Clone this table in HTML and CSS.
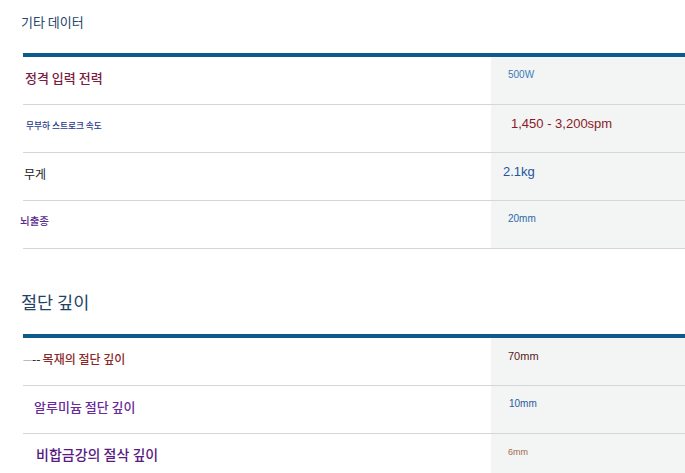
FILE: index.html
```html
<html>
  <head>
    <title>기술 데이터</title>
    <link rel="stylesheet" href="styles.css">
  </head>
  <body>
    <div class="section">
      <h3 class="title title-small">기타 데이터</h3>
      <div class="specs">
        <div class="row r1">
          <div class="label">정격 입력 전력</div>
          <div class="value">500W</div>
        </div>
        <div class="row r2">
          <div class="label">무부하 스트로크 속도</div>
          <div class="value">1,450 - 3,200spm</div>
        </div>
        <div class="row r3">
          <div class="label">무게</div>
          <div class="value">2.1kg</div>
        </div>
        <div class="row r4">
          <div class="label">뇌출종</div>
          <div class="value">20mm</div>
        </div>
      </div>
    </div>

    <div class="section second">
      <h3 class="title title-big">절단 깊이</h3>
      <div class="specs">
        <div class="row r5">
          <div class="label"><span class="smudge">一</span><span class="dash">--</span>목재의 절단 깊이</div>
          <div class="value">70mm</div>
        </div>
        <div class="row r6">
          <div class="label">알루미늄 절단 깊이</div>
          <div class="value">10mm</div>
        </div>
        <div class="row r7">
          <div class="label">비합금강의 절삭 깊이</div>
          <div class="value">6mm</div>
        </div>
      </div>
    </div>
  </body>
</html>
```

FILE: styles.css
```css
body {
    margin: 0;
    padding: 0;
    background: #fff;
    font-family: "Noto Sans CJK KR", "Liberation Sans", sans-serif;
}

.section {
    padding-left: 23px;
}

.title {
    margin: 0 0 0 -2px;
    font-weight: normal;
}

.title-small {
    font-size: 13px;
    line-height: 18px;
    color: #24466b;
    padding-top: 13px;
    height: 40px;
}

.second {
    margin-top: 42px;
}

.title-big {
    font-size: 17.5px;
    line-height: 22px;
    color: #1f4365;
    height: 43px;
}

.specs {
    border-top: 4px solid #0f5a8c;
}

.row {
    display: flex;
    height: 48px;
    box-sizing: border-box;
    border-bottom: 1px solid #d6d6d6;
}

.label {
    width: 468px;
    flex-shrink: 0;
    box-sizing: border-box;
    white-space: nowrap;
    font-weight: 500;
}

.value {
    flex: 1;
    box-sizing: border-box;
    background: #f3f4f4;
    font-family: "Liberation Sans", sans-serif;
    white-space: nowrap;
}

.r1 .label { padding: 13px 0 0 2px; font-size: 13px; line-height: 16px; color: #7b1c42; }
.r1 .value { padding: 11px 0 0 17px; font-size: 10px; line-height: 14px; color: #3a7bb8; }

.r2 .label { padding: 15px 0 0 3px; font-size: 8.7px; line-height: 12px; color: #27388a; }
.r2 .value { padding: 11px 0 0 20px; font-size: 13px; line-height: 16px; color: #8b1a26; }

.r3 .label { padding: 13px 0 0 1px; font-size: 12px; line-height: 16px; color: #222; font-weight: normal; }
.r3 .value { padding: 11px 0 0 12px; font-size: 13px; line-height: 16px; color: #2355a0; }

.r4 .label { padding-top: 13px; margin-left: -3px; width: 471px; font-size: 10.5px; line-height: 14px; color: #5a2b8c; }
.r4 .value { padding: 11px 0 0 17px; font-size: 10px; line-height: 14px; color: #2a6aa8; }

.r5 .label { padding-top: 14px; font-size: 12px; line-height: 14px; color: #8a2a2a; }
.r5 .value { padding: 11px 0 0 17px; font-size: 11px; line-height: 14px; color: #5a1a1e; }

.smudge {
    color: #bbb;
    font-size: 9px;
}

.dash {
    color: #333;
    letter-spacing: 0;
    margin-right: 2px;
}

.r6 .label { padding: 13px 0 0 11px; font-size: 13px; line-height: 16px; color: #6a2a9c; }
.r6 .value { padding: 11px 0 0 18px; font-size: 10px; line-height: 14px; color: #2a5a9c; }

.r7 .label { padding: 11px 0 0 13px; font-size: 14px; line-height: 18px; color: #5a1a80; }
.r7 .value { padding: 12px 0 0 17px; font-size: 9px; line-height: 12px; color: #a06a48; }
```
